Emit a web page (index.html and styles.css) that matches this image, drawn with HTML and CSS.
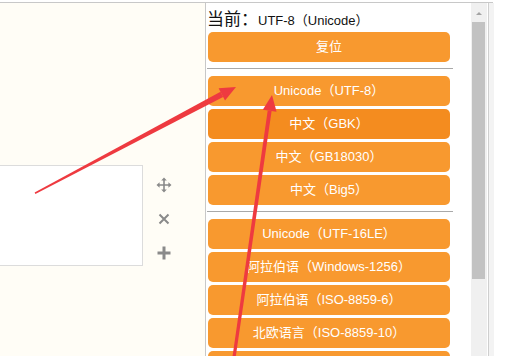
FILE: index.html
```html
<!DOCTYPE html>
<html lang="zh-CN">
<head>
<meta charset="utf-8">
<title>编码选择</title>
<link rel="stylesheet" href="styles.css">
</head>
<body>
<div class="frame">
  <div class="canvas">
    <div class="textbox"></div>
    <div class="tools">
      <svg class="ico" viewBox="0 0 16 16" width="16" height="16">
        <path d="M8 2.5V13.5M2.5 8H13.5" stroke="#8a8a8a" stroke-width="1.6" fill="none"/>
        <path d="M8 0.5L5.2 3.6H10.8Z M8 15.5L5.2 12.4H10.8Z M0.5 8L3.6 5.2V10.8Z M15.5 8L12.4 5.2V10.8Z" fill="#8a8a8a"/>
      </svg>
      <svg class="ico" viewBox="0 0 16 16" width="16" height="16">
        <path d="M3.5 3.5L12.5 12.5M12.5 3.5L3.5 12.5" stroke="#8a8a8a" stroke-width="2" fill="none"/>
      </svg>
      <svg class="ico" viewBox="0 0 16 16" width="16" height="16">
        <path d="M8 1.5V14.5M1.5 8H14.5" stroke="#8a8a8a" stroke-width="3" fill="none"/>
      </svg>
    </div>
  </div>
  <div class="panel">
    <div class="list">
      <div class="current"><span class="cur-label">当前：</span><span class="cur-value">UTF-8（Unicode）</span></div>
      <div class="btn">复位</div>
      <hr class="sep">
      <div class="btn">Unicode（UTF-8）</div>
      <div class="btn btn-hover">中文（GBK）</div>
      <div class="btn">中文（GB18030）</div>
      <div class="btn">中文（Big5）</div>
      <hr class="sep">
      <div class="btn">Unicode（UTF-16LE）</div>
      <div class="btn">阿拉伯语（Windows-1256）</div>
      <div class="btn">阿拉伯语（ISO-8859-6）</div>
      <div class="btn">北欧语言（ISO-8859-10）</div>
      <div class="btn"></div>
    </div>
    <div class="scrollbar">
      <div class="scroll-up"><span class="tri"></span></div>
      <div class="thumb"></div>
    </div>
  </div>
  <div class="edge"></div>
</div>
<svg class="arrows" viewBox="0 0 512 356" width="512" height="356">
  <polygon points="34.6,192.6 35.4,194.1 223.1,97.0 220.5,91.8" fill="#ee3a40"/>
  <polygon points="236,87 218.6,88.2 225,100.6" fill="#ee3a40"/>
  <polygon points="232.3,358 235.5,358.4 271.6,110.9 267.7,110.4" fill="#ee3a40"/>
  <polygon points="272,95 262.8,109.8 276.6,111.8" fill="#ee3a40"/>
</svg>
</body>
</html>
```
FILE: styles.css
```css
html, body {
  margin: 0;
  padding: 0;
  width: 512px;
  height: 356px;
  overflow: hidden;
  background: #ffffff;
}
body {
  position: relative;
  font-family: "Liberation Sans", "Noto Sans CJK SC", sans-serif;
}
.frame {
  margin-top: 2px;
  width: 493px;
  height: 354px;
  border-top: 1px solid #c8c8c8;
  display: flex;
  box-sizing: border-box;
}
.canvas {
  width: 205px;
  flex: none;
  background: #fffdf6;
  display: flex;
  align-items: flex-start;
  padding-top: 162px;
  box-sizing: border-box;
}
.textbox {
  width: 144px;
  height: 101px;
  margin-left: -1px;
  background: #ffffff;
  border: 1px solid #dcdcdc;
  box-sizing: border-box;
  flex: none;
}
.tools {
  margin-left: 13px;
  padding-top: 12px;
  display: flex;
  flex-direction: column;
  gap: 18px;
}
.ico {
  display: block;
}
.panel {
  flex: none;
  width: 282px;
  border-left: 1px solid #c8c8c8;
  background: #ffffff;
  display: flex;
  overflow: hidden;
}
.list {
  width: 265px;
  flex: none;
  padding-left: 1px;
  box-sizing: border-box;
}
.current {
  height: 29px;
  line-height: 29px;
  color: #111111;
  white-space: nowrap;
}
.cur-label {
  font-family: "Noto Sans CJK SC", sans-serif;
  font-size: 17px;
}
.cur-value {
  font-size: 13px;
  color: #111111;
}
.btn {
  width: 242px;
  height: 30px;
  margin: 0 0 3px 1px;
  background: #f8992f;
  border-radius: 5px;
  color: #ffffff;
  font-size: 13px;
  line-height: 30px;
  text-align: center;
  white-space: nowrap;
}
.btn-hover {
  background: #f48c1f;
}
.sep {
  width: 246px;
  margin: 6px 0 7px 0;
  height: 0;
  border: 0;
  border-top: 1px solid #a9a9a9;
}
.scrollbar {
  width: 16px;
  flex: none;
  background: #f0f0f0;
  display: flex;
  flex-direction: column;
}
.scroll-up {
  height: 17px;
  display: flex;
  align-items: center;
  justify-content: center;
}
.tri {
  width: 0;
  height: 0;
  border-left: 3px solid transparent;
  border-right: 3px solid transparent;
  border-bottom: 3px solid #a3a3a3;
  margin-top: 4px;
}
.thumb {
  margin: 2px 2px 0 1px;
  height: 257px;
  background: #c2c2c2;
}
.edge {
  width: 6px;
  flex: none;
  border-left: 1px solid #cfcfcf;
  background: #f3f3f3;
  box-sizing: border-box;
}
.arrows {
  position: absolute;
  left: 0;
  top: 0;
  pointer-events: none;
}
```
